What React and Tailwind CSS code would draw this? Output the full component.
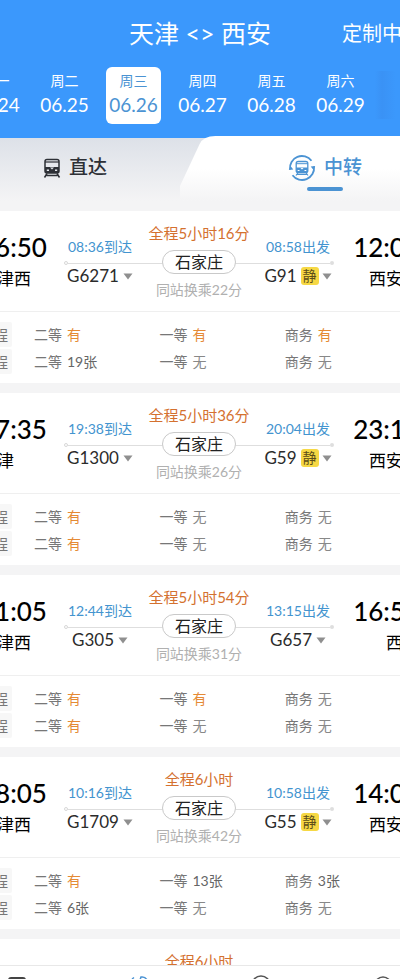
import React, { useState } from 'react';

const DATES = [
  { week: '周一', date: '06.24' },
  { week: '周二', date: '06.25' },
  { week: '周三', date: '06.26' },
  { week: '周四', date: '06.27' },
  { week: '周五', date: '06.28' },
  { week: '周六', date: '06.29' },
];

const TRIPS = [
  {
    depart: '16:50', from: '天津西', arrive: '12:03', to: '西安北',
    total: '全程5小时16分', via: '石家庄', wait: '同站换乘22分',
    first: { time: '08:36到达', train: 'G6271' },
    second: { time: '08:58出发', train: 'G91', quiet: true },
    seats: [['有', '有', '有'], ['19张', '无', '无']],
  },
  {
    depart: '17:35', from: '天津', arrive: '23:11', to: '西安北',
    total: '全程5小时36分', via: '石家庄', wait: '同站换乘26分',
    first: { time: '19:38到达', train: 'G1300' },
    second: { time: '20:04出发', train: 'G59', quiet: true },
    seats: [['有', '无', '无'], ['有', '无', '无']],
  },
  {
    depart: '11:05', from: '天津西', arrive: '16:59', to: '西安',
    total: '全程5小时54分', via: '石家庄', wait: '同站换乘31分',
    first: { time: '12:44到达', train: 'G305' },
    second: { time: '13:15出发', train: 'G657' },
    seats: [['有', '有', '无'], ['有', '无', '无']],
  },
  {
    depart: '08:05', from: '天津西', arrive: '14:05', to: '西安北',
    total: '全程6小时', via: '石家庄', wait: '同站换乘42分',
    first: { time: '10:16到达', train: 'G1709' },
    second: { time: '10:58出发', train: 'G55', quiet: true },
    seats: [['有', '13张', '3张'], ['6张', '无', '无']],
  },
  {
    depart: '09:20', from: '天津西', arrive: '15:20', to: '西安北',
    total: '全程6小时', via: '石家庄', wait: '同站换乘35分',
    first: { time: '11:30到达', train: 'G1711' },
    second: { time: '12:05出发', train: 'G57' },
    seats: [['有', '有', '无'], ['有', '无', '无']],
  },
];

const SEAT_NAMES = ['二等', '一等', '商务'];

const TrainIcon = () => (
  <svg viewBox="0 0 18 20" className="w-[18px] h-5" fill="none" aria-hidden="true">
    <rect x="2" y="1.500" width="14" height="13.500" rx="2" stroke="#2d3036" strokeWidth="1.500" />
    <path d="M2 4h14" stroke="#2d3036" strokeWidth="1.200" />
    <path d="M2 9h14v6H2z" fill="#2d3036" />
    <path d="M7 9.500h4l-2 2z" fill="#e4e7ec" />
    <path d="M3.800 12.300h2.200M12 12.300h2.200" stroke="#e4e7ec" strokeWidth="1.400" />
    <path d="M4 15.500l-2.500 4M14 15.500l2.500 4M3.500 17.500h11" stroke="#2d3036" strokeWidth="1.500" />
  </svg>
);

const TransferIcon = () => (
  <svg viewBox="0 0 28 28" className="w-7 h-7" fill="none" stroke="#4b93d3" aria-hidden="true">
    <path d="M2 15.500A12 12 0 0 1 23.500 6.800" strokeWidth="1.800" />
    <path d="M26 12.500A12 12 0 0 1 4.500 21.200" strokeWidth="1.800" />
    <path d="M0.800 16l1.700-4 2.800 3.500zM27.200 12l-1.700 4-2.800-3.500z" fill="#4b93d3" stroke="none" />
    <rect x="8.200" y="7.500" width="11.600" height="11" rx="2" strokeWidth="1.300" />
    <path d="M8.200 9.700h11.600" strokeWidth="1" />
    <path d="M8.200 13.500h11.600v5H8.200z" fill="#4b93d3" stroke="none" />
    <path d="M12.500 14h3l-1.500 1.500z" fill="#fff" stroke="none" />
    <path d="M9.700 16.500h1.800M16.500 16.500h1.800" stroke="#fff" strokeWidth="1.100" />
    <path d="M9.800 19l-1.800 2.500M18.200 19l1.800 2.500M9.500 20.300h9" strokeWidth="1.200" />
  </svg>
);

const Caret = () => (
  <svg viewBox="0 0 10 7" className="w-[10px] h-[7px]" aria-hidden="true">
    <path d="M0.500 0.500h9L5 6.500z" fill="#8f8f8f" />
  </svg>
);

const Leg = ({ leg }) => (
  <div className="flex flex-col items-center pt-[26px]">
    <span className="text-sm leading-5 text-[#4394cf] whitespace-nowrap">{leg.time}</span>
    <button className="mt-[9px] flex items-center gap-1 text-[17px] leading-5 text-[#2b2b2b] whitespace-nowrap">
      {leg.train}
      <span className="flex items-center gap-[3px]">
        {leg.quiet && (
          <span className="rounded-[3px] bg-[#f6d844] px-[2px] text-sm leading-[18px] text-[#5c4d18]">静</span>
        )}
        <Caret />
      </span>
    </button>
  </div>
);

const TripCard = ({ trip }) => (
  <li className="bg-white">
    <div className="flex h-[101px] border-b border-[#efefef]">
      <div className="w-[84px] shrink-0 pt-5 text-black">
        <p className="text-[26px] leading-8 font-medium">{trip.depart}</p>
        <p className="mt-[6px] text-[17px] leading-5">{trip.from}</p>
      </div>
      <div className="relative flex-1 grid grid-cols-[72px_1fr_72px]">
        <div className="absolute inset-x-0 top-[50px] flex items-center">
          <i className="size-1 rounded-full border border-[#d8d8d8]" />
          <i className="h-px flex-1 bg-[#dedede]" />
          <i className="size-1 rounded-full bg-[#dedede]" />
        </div>
        <Leg leg={trip.first} />
        <div className="relative flex flex-col items-center pt-3 whitespace-nowrap">
          <span className="text-[15px] leading-5 text-[#d4712f]">{trip.total}</span>
          <span className="mt-[7px] rounded-full border border-[#c9c9c9] bg-white px-3 text-base leading-[22px] text-[#222]">
            {trip.via}
          </span>
          <span className="mt-[6px] text-sm leading-5 text-[#b0b0b0]">{trip.wait}</span>
        </div>
        <Leg leg={trip.second} />
      </div>
      <div className="w-[86px] shrink-0 pt-5 text-right text-black">
        <p className="text-[26px] leading-8 font-medium">{trip.arrive}</p>
        <p className="mt-[6px] text-[17px] leading-5">{trip.to}</p>
      </div>
    </div>
    <div className="pt-[9px] pb-2">
      <table className="w-full table-fixed text-left text-sm leading-[27px] text-[#777]">
        <tbody>
          {trip.seats.map((row, i) => (
            <tr key={i}>
              <th className="w-[54px] font-normal">
                <span className="rounded-[2px] bg-[#f7f7f7] py-1 pr-1">{i === 0 ? '一程' : '二程'}</span>
              </th>
              {row.map((count, j) => (
                <td key={SEAT_NAMES[j]} className={j < 2 ? 'w-[28.5%]' : ''}>
                  <span className="mr-[5px]">{SEAT_NAMES[j]}</span>
                  <span className={count === '有' ? 'text-[#e58a35]' : count === '无' ? 'text-[#888]' : 'text-[#666]'}>
                    {count}
                  </span>
                </td>
              ))}
            </tr>
          ))}
        </tbody>
      </table>
    </div>
  </li>
);

const BottomNav = () => (
  <nav className="h-[14px] shrink-0 overflow-hidden border-t border-[#e8e8e8] bg-white">
    <div className="-mx-11 grid grid-cols-4 justify-items-center pt-[9px]">
      <a href="#home" aria-label="首页">
        <svg viewBox="0 0 24 24" className="size-6" fill="none" stroke="#444" strokeWidth="2">
          <rect x="4" y="3" width="16" height="17" rx="2" />
        </svg>
      </a>
      <a href="#ticket" aria-label="车票">
        <svg viewBox="0 0 24 24" className="size-6" fill="none" stroke="#4b93d3" strokeWidth="1.500">
          <path d="M5 4l2-1.500M13 5l1-3c3-0.500 5 1 6 3l1 6-9 8" />
        </svg>
      </a>
      <a href="#order" aria-label="订单">
        <svg viewBox="0 0 24 24" className="size-6" fill="none" stroke="#555" strokeWidth="1.500">
          <circle cx="12" cy="10" r="9" />
        </svg>
      </a>
      <a href="#mine" aria-label="我的">
        <svg viewBox="0 0 24 24" className="size-6" fill="none" stroke="#555" strokeWidth="1.500">
          <circle cx="12" cy="10" r="8" />
        </svg>
      </a>
    </div>
  </nav>
);

const App = () => {
  const [selected, setSelected] = useState('06.26');

  return (
    <div className="h-screen flex flex-col overflow-hidden bg-[#f4f4f5] font-['Lato','Noto_Sans_CJK_SC',sans-serif]">
      <header className="h-[138px] shrink-0 overflow-hidden bg-[#3b98fc] text-white">
        <div className="-mx-[22px] grid grid-cols-[1fr_auto_1fr] items-center pt-[17px]">
          <h1 className="col-start-2 text-[25px] leading-8">天津 &lt;&gt; 西安</h1>
          <button className="justify-self-end text-xl leading-8 whitespace-nowrap">定制中转</button>
        </div>
        <div className="mt-[18px] flex justify-center pl-[5px]">
          {DATES.map((d) => (
            <div key={d.date} className="w-[69px] shrink-0 flex justify-center">
              <button
                onClick={() => setSelected(d.date)}
                className={`h-[57px] w-[55px] rounded-md pb-[2px] flex flex-col items-center justify-center ${
                  selected === d.date ? 'bg-white text-[#4b93d3]' : ''
                }`}
              >
                <span className="text-sm leading-5">{d.week}</span>
                <span className="text-[19px] leading-7">{d.date}</span>
              </button>
            </div>
          ))}
          <div className="w-[69px] shrink-0">
            <button aria-label="日历" className="mt-1 h-12 w-full bg-linear-to-r from-[#3b98fc] via-[#3a92f5] via-10% to-[#3b98fc] to-30%" />
          </div>
        </div>
      </header>

      <div className="relative grid h-[63px] shrink-0 grid-cols-[9fr_11fr] bg-linear-to-b from-[#dde1e8] to-[#f4f4f5]">
        <button className="flex items-center gap-2 pl-[43px] pb-1 text-[19px] font-medium text-[#2d3036]">
          <TrainIcon />
          直达
        </button>
        <div className="relative">
          <svg viewBox="0 0 224 65" preserveAspectRatio="none" className="absolute bottom-0 left-0 h-[65px] w-full" aria-hidden="true">
            <defs>
              <linearGradient id="tab" x1="0" y1="0" x2="0" y2="1">
                <stop offset="0.500" stopColor="#fff" />
                <stop offset="1" stopColor="#f4f4f5" />
              </linearGradient>
            </defs>
            <path d="M0 50L20 8Q24 0 36 0H224V65H0z" fill="url(#tab)" />
          </svg>
          <button className="relative flex h-full w-full items-center gap-2 pl-[108px] pb-1 text-[19px] font-medium text-[#4b93d3]">
            <TransferIcon />
            中转
            <i className="absolute bottom-[10px] left-[127px] h-1 w-9 rounded-full bg-[#4b93d3]" />
          </button>
        </div>
      </div>

      <main className="min-h-0 flex-1 overflow-hidden pt-[10px]">
        <ul className="-mx-5 flex flex-col gap-[10px] bg-[#f4f4f5]">
          {TRIPS.map((trip) => (
            <TripCard key={trip.depart} trip={trip} />
          ))}
        </ul>
      </main>

      <BottomNav />
    </div>
  );
};

export default App;
